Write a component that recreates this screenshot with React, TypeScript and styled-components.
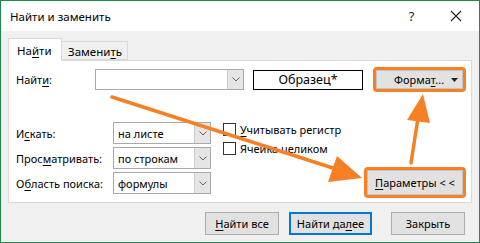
import React from "react";
import styled, { createGlobalStyle } from "styled-components";

const Global = createGlobalStyle`
  html, body { margin: 0; padding: 0; background: #ffffff; }
  body { font-family: "Noto Sans", "Segoe UI", sans-serif; font-size: 11px; color: #000; }
  * { box-sizing: border-box; white-space: nowrap; }
`;

const ORANGE = "#f58025";

const Dialog = styled.div`
  position: relative;
  width: 480px;
  height: 243px;
  border: 1px solid #218a4b;
  background: #f0f0f0;
  display: flex;
  flex-direction: column;
  overflow: hidden;
`;

const TitleBar = styled.div`
  height: 30px;
  background: #ffffff;
  display: flex;
  align-items: center;
  padding-left: 9px;
  flex: none;
`;

const Title = styled.div`
  flex: 1;
  font-size: 11.5px;
`;

const TitleIcon = styled.div<{ $w: number }>`
  width: ${(p) => p.$w}px;
  height: 30px;
  display: flex;
  align-items: center;
  justify-content: center;
  font-size: 13px;
  color: #222;
`;

const Body = styled.div`
  padding: 7px 7px 0 7px;
  display: flex;
  flex-direction: column;
`;

const Tabs = styled.div`
  display: flex;
  align-items: flex-end;
  height: 22px;
  position: relative;
  z-index: 1;
`;

const Tab = styled.div<{ $active?: boolean }>`
  height: ${(p) => (p.$active ? 23 : 19)}px;
  margin-bottom: ${(p) => (p.$active ? -1 : 0)}px;
  background: ${(p) => (p.$active ? "#ffffff" : "#f0f0f0")};
  border: 1px solid #d9d9d9;
  border-bottom: ${(p) => (p.$active ? "none" : "1px solid #d9d9d9")};
  border-left: ${(p) => (p.$active ? "1px solid #d9d9d9" : "none")};
  padding: ${(p) => (p.$active ? "4px 8px 0 8px" : "2px 6px 0 6px")};
  width: ${(p) => (p.$active ? 54 : 66)}px;
  font-size: 11.5px;
`;

const Panel = styled.div`
  height: 143px;
  background: #ffffff;
  border: 1px solid #d9d9d9;
  padding: 8px 5px 8px 7px;
  display: flex;
  flex-direction: column;
`;

const U = styled.span`
  text-decoration: underline;
  text-underline-offset: 2px;
`;

const Row = styled.div`
  display: flex;
  align-items: center;
  height: 21px;
`;

const Label = styled.div<{ $w: number }>`
  width: ${(p) => p.$w}px;
  flex: none;
`;

const Combo = styled.div<{ $w: number; $h: number }>`
  width: ${(p) => p.$w}px;
  height: ${(p) => p.$h}px;
  border: 1px solid #a9a9a9;
  background: #fff;
  display: flex;
  align-items: stretch;
  flex: none;
`;

const ComboText = styled.div`
  flex: 1;
  padding-left: 4px;
  display: flex;
  align-items: center;
`;

const DropPart = styled.div`
  width: 16px;
  background: #e5e5e5;
  border-left: 1px solid #cccccc;
  display: flex;
  align-items: center;
  justify-content: center;
`;

const Sample = styled.div`
  width: 110px;
  height: 20px;
  margin-left: 9px;
  border: 1px solid #000;
  display: flex;
  align-items: center;
  justify-content: center;
  font-size: 12.5px;
  flex: none;
`;

const Ring = styled.div<{ $w: number; $h: number }>`
  width: ${(p) => p.$w}px;
  height: ${(p) => p.$h}px;
  border: 3px solid ${ORANGE};
  border-radius: 4px;
  display: flex;
  flex: none;
`;

const GrayButton = styled.div<{ $justify?: string }>`
  flex: 1;
  background: #e1e1e1;
  border: 1px solid #c4c4c4;
  display: flex;
  align-items: center;
  justify-content: ${(p) => p.$justify || "center"};
  padding: 0 4px;
`;

const FormatLabel = styled.span`
  padding-left: 13px;
`;

const Lower = styled.div`
  display: flex;
  margin-top: 32px;
  flex: 1;
`;

const SelectGrid = styled.div`
  display: grid;
  grid-template-columns: 97px 98px;
  grid-auto-rows: 22px;
  row-gap: 3px;
  align-items: center;
`;

const Checks = styled.div`
  margin-left: 12px;
  display: flex;
  flex-direction: column;
  gap: 4px;
`;

const CheckRow = styled.div`
  display: flex;
  align-items: center;
  height: 15px;
  gap: 4px;
`;

const Box = styled.div`
  width: 13px;
  height: 13px;
  border: 1px solid #333;
  background: #fff;
`;

const Spacer = styled.div`
  flex: 1;
`;

const RightCol = styled.div`
  align-self: flex-end;
  margin-bottom: -4px;
`;

const Footer = styled.div`
  display: flex;
  justify-content: flex-end;
  padding: 9px 7px 0 0;
`;

const FootButton = styled.div<{ $w: number; $gap: number; $primary?: boolean }>`
  width: ${(p) => p.$w}px;
  height: 23px;
  margin-left: ${(p) => p.$gap}px;
  background: #e1e1e1;
  border: ${(p) => (p.$primary ? "2px solid #0078d7" : "1px solid #adadad")};
  display: flex;
  align-items: center;
  justify-content: center;
`;

const Overlay = styled.svg`
  position: absolute;
  left: -1px;
  top: -1px;
  pointer-events: none;
`;

const Chevron = () => (
  <svg width="8" height="5" viewBox="0 0 8 5">
    <path d="M0.5 0.5 L4 4 L7.5 0.5" fill="none" stroke="#606060" strokeWidth="1" />
  </svg>
);

const Select = ({ text }: { text: string }) => (
  <Combo $w={98} $h={22}>
    <ComboText>{text}</ComboText>
    <DropPart>
      <Chevron />
    </DropPart>
  </Combo>
);

export default function App() {
  return (
    <>
      <Global />
      <Dialog>
        <TitleBar>
          <Title>Найти и заменить</Title>
          <TitleIcon $w={43}>?</TitleIcon>
          <TitleIcon $w={46}>
            <svg width="12" height="12" viewBox="0 0 12 12">
              <path d="M1 1 L11 11 M11 1 L1 11" stroke="#222" strokeWidth="1.1" />
            </svg>
          </TitleIcon>
        </TitleBar>
        <Body>
          <Tabs>
            <Tab $active>
              На<U>й</U>ти
            </Tab>
            <Tab>
              Замени<U>т</U>ь
            </Tab>
          </Tabs>
          <Panel>
            <Row>
              <Label $w={79}>
                Найт<U>и</U>:
              </Label>
              <Combo $w={149} $h={21}>
                <ComboText />
                <DropPart>
                  <Chevron />
                </DropPart>
              </Combo>
              <Sample>Образец*</Sample>
              <Spacer />
              <Ring $w={93} $h={25}>
                <GrayButton $justify="space-between">
                  <FormatLabel>
                    Форма<U>т</U>...
                  </FormatLabel>
                  <svg width="7" height="4" viewBox="0 0 7 4">
                    <path d="M0 0 L7 0 L3.5 4 Z" fill="#222" />
                  </svg>
                </GrayButton>
              </Ring>
            </Row>
            <Lower>
              <SelectGrid>
                <Label $w={97}>
                  И<U>с</U>кать:
                </Label>
                <Select text="на листе" />
                <Label $w={97}>
                  Прос<U>м</U>атривать:
                </Label>
                <Select text="по строкам" />
                <Label $w={97}>
                  О<U>б</U>ласть поиска:
                </Label>
                <Select text="формулы" />
              </SelectGrid>
              <Checks>
                <CheckRow>
                  <Box />
                  <span>
                    <U>У</U>читывать регистр
                  </span>
                </CheckRow>
                <CheckRow>
                  <Box />
                  <span>Ячейка целиком</span>
                </CheckRow>
              </Checks>
              <Spacer />
              <RightCol>
                <Ring $w={102} $h={31}>
                  <GrayButton>
                    <span>
                      <U>П</U>араметры &lt; &lt;
                    </span>
                  </GrayButton>
                </Ring>
              </RightCol>
            </Lower>
          </Panel>
          <Footer>
            <FootButton $w={74} $gap={0}>
              <span>
                <U>Н</U>айти все
              </span>
            </FootButton>
            <FootButton $w={83} $gap={10} $primary>
              <span>
                Найти да<U>л</U>ее
              </span>
            </FootButton>
            <FootButton $w={74} $gap={19}>
              Закрыть
            </FootButton>
          </Footer>
        </Body>
        <Overlay width="480" height="243" viewBox="0 0 480 243">
          <line x1="112" y1="97" x2="336" y2="169" stroke={ORANGE} strokeWidth="3.5" strokeLinecap="round" />
          <polygon points="362,178 328,182 337,156" fill={ORANGE} />
          <line x1="411" y1="163" x2="418" y2="118" stroke={ORANGE} strokeWidth="3.5" strokeLinecap="round" />
          <polygon points="423,94 430,123 407,120" fill={ORANGE} />
        </Overlay>
      </Dialog>
    </>
  );
}
